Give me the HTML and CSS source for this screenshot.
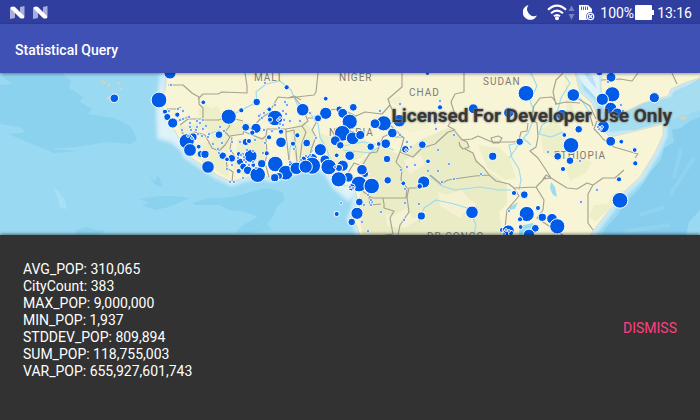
FILE: index.html
```html
<!DOCTYPE html>
<html lang="en">
<head>
<meta charset="utf-8">
<title>Statistical Query</title>
<link rel="stylesheet" href="styles.css">
</head>
<body>
<div class="status-bar">
  <div class="status-group">
    <svg class="n-icon" viewBox="0 0 15 13" aria-hidden="true"><path d="M0 1L5 4V12L0 13ZM10 1L14.500 0V12L10 9Z" fill="#a9aedb"/><path d="M1 1Q3 0 5 1L14 10V12Q12 13 10 12L1 3Z" fill="#fff"/></svg>
    <svg class="n-icon" viewBox="0 0 15 13" aria-hidden="true"><path d="M0 1L5 4V12L0 13ZM10 1L14.500 0V12L10 9Z" fill="#a9aedb"/><path d="M1 1Q3 0 5 1L14 10V12Q12 13 10 12L1 3Z" fill="#fff"/></svg>
  </div>
  <div class="status-group status-right">
    <svg class="moon" viewBox="0 0 14 15" aria-hidden="true"><path d="M5.500 0A7.500 7.500 0 1 0 14 10.500A7 7 0 0 1 5.500 0Z" fill="#fff"/></svg>
    <svg class="wifi" viewBox="0 0 28 17" aria-hidden="true"><g fill="none" stroke="#fff" stroke-width="2.100"><path d="M1 5.800Q10 -2.500 19 5.800"/><path d="M4 9.300Q10 4 16 9.300"/><path d="M7 12.300Q10 9.700 13 12.300"/></g><circle cx="10" cy="14.300" r="2" fill="#fff"/><path d="M21.500 7L24.500 1.500L27.500 7ZM21.500 10H27.500L24.500 16Z" fill="#7680c4"/></svg>
    <svg class="sd" viewBox="0 0 16 17" aria-hidden="true"><path d="M0 1H9L13 5V16H0Z" fill="#fff"/><path d="M2.500 2.500V6M4.500 2.500V6M6.500 2.500V6M8.500 2.500V6" stroke="#5660b0"/><circle cx="11.500" cy="12.500" r="4" fill="#303f9f" stroke="#303f9f"/><circle cx="11.500" cy="12.500" r="3.200" fill="none" stroke="#fff" stroke-width="1.300"/><path d="M10 11L13 14M13 11L10 14" stroke="#fff" stroke-width="1.200"/></svg>
    <span class="percent">100%</span>
    <svg class="battery" viewBox="0 0 20 15" aria-hidden="true"><path d="M0 1Q0 0 1 0H16Q17 0 17 1V5H19V10H17V14Q17 15 16 15H1Q0 15 0 14Z" fill="#fff"/></svg>
    <span class="clock">13:16</span>
  </div>
</div>
<header class="app-bar"><h1>Statistical Query</h1></header>
<main class="map">
  <svg class="map-canvas" viewBox="0 73 700 162" preserveAspectRatio="xMidYMid slice" role="img" aria-label="Map of African cities">
    <defs>
      <filter id="soft" x="-5%" y="-5%" width="110%" height="110%"><feGaussianBlur stdDeviation="1.5"/></filter>
      <filter id="edge" x="-5%" y="-5%" width="110%" height="110%"><feGaussianBlur stdDeviation="0.6"/></filter>
      <path id="africa" d="M167 60V73L166 82L165 90L160 100L163 108L165 116L169 124L175 131L181 142L187 155L202 165L217 175L232 182L243 178L260 175L272 178L290 173L300 168L315 163L323 167L329 173L334 182L345 186L353 185L357 197L355 210L351 219L357 226L363 245H583L590 235L607 213L623 193L640 177L655 153L663 135V124L647 128L627 133L610 137L603 130L598 116L592 103L580 92L575 73V60Z"/>
      <path id="arabia" d="M602 60V73L601 85L602 97L607 118L623 113L643 103L668 96L671 89L687 82L700 78V60Z"/>
    </defs>
    <rect y="60" width="700" height="185" fill="#99d9f2"/>
    <g fill="#8bd2ef" filter="url(#edge)">
      <path d="M0 85L12 84L3 77V73H62L71 81L69 88L83 97L80 102L92 109L88 114L114 118L130 126L134 132L137 140L130 144L108 142L75 147L50 149L80 151L54 153L8 134L26 132L20 127L0 124ZM139 199L158 196L174 196L189 198L180 202L172 206L156 210L142 205L150 203ZM192 203L209 198L223 198L241 195L258 190L267 188L282 192L285 200L277 206L274 215L267 224L272 230L240 234L236 231L245 224L258 217L246 212L229 210L220 205L195 205ZM76 230L86 227L97 230L106 231L98 235H76ZM149 176L155 181L158 175L163 187L155 185Z"/>
    </g>
    <path d="M53 187L58 191L65 200L67 209L60 208L58 199Z" fill="#a9dff4"/>
    <g fill="#86cdee" filter="url(#edge)">
      <path d="M700 117L690 121L681 128L672 130L674 142L664 148L661 160L650 172L640 188L625 203L617 216L604 230L600 240H685L689 222L700 210Z"/>
      <path d="M670 195L694 158M640 215L665 207M627 231L670 225M681 149L674 178" stroke="#8fd3f0" stroke-width="4" fill="none"/>
      <path d="M700 210L690 225L686 240H700Z" fill="#99d9f2"/>
    </g>
    <g filter="url(#soft)" fill="#c9eaf6" stroke="#c9eaf6" stroke-linejoin="round">
      <use href="#africa" stroke-width="9"/><use href="#arabia" stroke-width="7"/>
      <path fill="#dff2f8" d="M161 73L157 110L158 138L172 142L187 155L170 110ZM312 164L326 175L334 188L348 200L361 190Z" stroke-width="3"/>
    </g>
    <path d="M578 73L598 98L605 131L635 130L671 120L700 110V78L672 97L643 103L607 119L600 97L598 73Z" fill="#a7ddf0"/>
    <path d="M577 73L583 84L598 100L600 92L599 73Z" fill="#def2f8"/>
    <path d="M584 73L590 82L597 89L593 77L589 73Z" fill="#b9e3f3"/>
    <g fill="#f7f5d6" stroke="#dcdcc6"><use href="#africa"/><use href="#arabia"/></g>
    <g fill="#edefc9" filter="url(#edge)">
      <path d="M178 126L190 125L201 122L198 110L205 103L211 108L218 106L222 117L232 122L243 121L252 124L245 132L231 136L228 150L229 178L217 171L205 164L187 149ZM238 139L262 137L266 142L263 176L243 176L233 169L236 156ZM290 130L302 121L314 130L314 142L309 163L296 165L292 148Z"/>
      <path d="M319 132L330 137L338 134L345 142L361 137L374 147L361 158L350 162L345 180L337 182L327 166L318 157Z"/>
      <path d="M360 162L372 151L383 147L400 155L422 139L450 127L463 138L481 166L507 184L507 204L499 212L503 235H363L357 210L361 190Z" fill="#e9ecc5"/>
      <path d="M566 169L580 157L592 162L586 173L570 181ZM589 216L594 205L608 204L612 194L625 190L619 201L595 222ZM565 76L572 104L578 123L567 121ZM540 130L556 120L568 140L560 161L543 153ZM478 145L500 148L510 158L516 178L505 180L487 168Z"/>
      <path d="M384 100L400 96L404 115L392 127L414 132L430 128L422 118L407 110Z" fill="#f1f2cf"/>
    </g>
    <g fill="#f4f2d2" filter="url(#edge)"><path d="M386 214L393 216L406 208L412 218L420 218L405 228L387 226ZM438 192L447 195L461 190L469 199L477 205L466 210L460 218L440 206ZM190 133L207 128L214 140L197 145ZM404 160L420 154L425 165L410 174Z"/></g>
    <g fill="none" stroke="#9bdcf0" stroke-width="1.200" stroke-linejoin="round">
      <path d="M230 116L257 102L256 92L266 84L280 81L291 90L297 104L309 112L318 124L320 137L326 148L333 166M209 134L220 130M313 150L304 160M291 141L289 160M430 176L442 186L455 190L480 187L499 190L511 190M419 222L424 208L436 200L454 204L467 208L476 224L474 235M531 73L537 86L530 100L535 115L528 133L519 143L509 145L512 158L519 169L521 180L519 190M519 143L515 150L509 158M523 138L531 145M565 76L570 83L561 98L556 117L542 125L539 134L551 137L563 132M343 146L363 142L380 145L394 150M343 150L370 153L388 141M580 98L592 116"/>
    </g>
    <path d="M520 226L533 223L536 230L532 240H518ZM551 182L555 187L557 197L553 195L550 188ZM510 207L518 202L515 209L509 210Z" fill="#9bdcf0"/>
    <g fill="none" stroke="#a5a391" stroke-width="1.150" stroke-linejoin="round">
      <path d="M168 85H183L192 93L199 97L199 104L203 108L203 120L219 120L226 117L231 118L243 121M198 99L203 94L218 94L222 92L247 93V86L245 73M167 109H177L181 107M169 119L179 121L190 116M180 125L188 119L201 119M181 129L184 136L195 132L205 135L212 148L219 151L225 145L230 137L225 132L229 127L231 120M230 136L243 134L244 131L253 127L261 118L269 113L278 97L288 98L294 96L301 100M288 98L314 95L316 92L318 73M295 98L302 107L308 121L302 126L286 129L267 129L266 136L262 139L245 132M286 129V135L289 160M232 182L233 172L227 168L226 156L220 156M232 137L230 149L236 158M266 138L267 154L265 163L269 177M286 132L294 130L297 162M302 126L306 132L302 143L299 167M317 121L312 130L316 137L311 150L309 165M308 118L318 118L326 110L341 109L356 116L365 112L382 114L390 105L388 99L402 87V73M390 105L396 117L390 125L404 138L400 152L413 157L422 148L435 144L448 132L455 130L448 126L455 115L451 102L455 94L464 92V73M343 178L348 173L354 163L362 166L370 153L377 152L383 137L391 133L394 137H403M361 190L372 198H406L407 188L401 180L402 169L396 162L400 152M369 197L370 205L381 204M372 198H383L384 204L384 208L394 211L390 218L393 234L380 236M407 197L409 212L400 225L398 235M407 197L409 188H422M430 175L441 184L448 180L461 178L475 176L489 175L496 181L509 184L514 188L536 187L546 177M455 131L462 140L472 139L478 136L492 142H514L519 140L521 132L527 131L528 123M461 139L467 142L469 147L463 149L460 146L459 142M491 138L498 136L502 138L499 143L493 143ZM465 149L473 153L476 161L484 168L489 175M552 97L540 98L534 106L531 119L537 123L538 137L536 147L530 151L538 158L546 170M546 170L551 178L543 179L546 175L551 178M552 97L557 104L566 102L580 103M563 73L556 80L553 92L556 105M597 121L594 129L599 134L603 139L614 147L638 154L635 158M624 170L615 178L603 178L593 185L587 183L577 189L567 188L551 178M593 185L588 194V223L593 230M536 187L544 200L543 210L537 218L564 236M514 188L519 196L507 210L505 228M589 112L593 126M672 73L677 84M601 80L620 79L632 81L638 73M577 98L590 106L596 119"/>
    </g>
    <g class="map-label">
      <text x="254" y="81">MALI</text><text x="339" y="81">NIGER</text><text x="409" y="96">CHAD</text><text x="483" y="85">SUDAN</text><text x="329" y="136">NIGERIA</text><text x="554" y="159">ETHIOPIA</text><text x="427" y="240">DR CONGO</text>
    </g>
    <g fill="#d9d3b5"><circle cx="102" cy="81" r="1.500"/><circle cx="104" cy="83" r="1.200"/><circle cx="109" cy="85" r="1.500"/><circle cx="119" cy="83" r="1.200"/><circle cx="121" cy="89" r="1.200"/><circle cx="108" cy="98" r="1.500"/><path d="M679 118L684 116L688 118L682 120Z"/></g>
    <g id="cities" class="cities"></g>
  </svg>
  <div class="watermark">Licensed For Developer Use Only</div>
</main>
<section class="snackbar">
  <ul class="stats">
    <li>AVG_POP: 310,065</li>
    <li>CityCount: 383</li>
    <li>MAX_POP: 9,000,000</li>
    <li>MIN_POP: 1,937</li>
    <li>STDDEV_POP: 809,894</li>
    <li>SUM_POP: 118,755,003</li>
    <li>VAR_POP: 655,927,601,743</li>
  </ul>
  <button class="dismiss" type="button">DISMISS</button>
</section>
<script src="script.js"></script>
</body>
</html>
```
FILE: styles.css
```css
* { box-sizing: border-box; }
body {
  margin: 0;
  min-height: 100vh;
  display: flex;
  flex-direction: column;
  background: #323232;
  color: #fff;
  font-family: Roboto, "Liberation Sans", sans-serif;
}
svg { display: block; flex: none; }
.status-bar {
  display: flex;
  align-items: center;
  justify-content: space-between;
  height: 24px;
  padding: 1px 8px 0 10px;
  background: #303f9f;
  font-size: 14px;
  line-height: 16px;
}
.status-group { display: flex; align-items: center; gap: 8px; }
.status-right { gap: 4px; }
.n-icon { width: 15px; height: 13px; }
.moon { width: 14px; height: 15px; margin-right: 6px; }
.wifi { width: 28px; height: 17px; }
.sd { width: 16px; height: 17px; }
.percent { margin-left: 1px; }
.battery { width: 20px; height: 15px; margin: 0 -2px 0 -3px; }
.app-bar {
  position: relative;
  z-index: 1;
  display: flex;
  align-items: center;
  height: 49px;
  padding: 2px 15px 0;
  background: #3f51b5;
  box-shadow: 0 1px 3px rgba(0, 0, 0, .4);
}
.app-bar h1 { margin: 0; font-size: 14px; line-height: 20px; font-weight: 500; }
.map { position: relative; flex: 1 0 120px; min-height: 0; overflow: hidden; }
.map-canvas { position: absolute; inset: 0; width: 100%; height: 100%; }
.map-label { font-size: 10px; letter-spacing: 1px; fill: #7c7c76; }
.cities circle { fill: #005ce6; stroke: #fff; stroke-width: 1; }
.watermark {
  position: absolute;
  top: 31px;
  right: 28px;
  color: rgba(40, 40, 36, .85);
  font-size: 19px;
  line-height: 24px;
  font-weight: 700;
  text-shadow: 0 0 2px #888, 0 0 2px #888;
}
.snackbar {
  position: relative;
  display: flex;
  align-items: center;
  justify-content: space-between;
  padding: 0 15px 0 23px;
  background: #323232;
  box-shadow: 0 -1px 3px rgba(0, 0, 0, .5);
}
.stats {
  margin: 0;
  padding: 26px 0 40px;
  list-style: none;
  font-size: 14px;
  line-height: 17px;
}
.dismiss {
  padding: 8px;
  border: 0;
  background: none;
  color: #ff4081;
  font: 400 14px/20px Roboto, "Liberation Sans", sans-serif;
}
```
FILE: script.js
```javascript
// Towns: x, y. Drawn as small dots over the cities.
const towns = [
  [171,85],[178,109],[183,111],[180,120],[183,119],[189,117],[197,121],[197,127],[196,130],[182,130],[191,130],
  [169,111],[190,123],[203,120],[200,123],[206,126],[209,134],[203,129],[188,136],[198,134],[192,138],[202,136],[208,137],[213,144],[222,143],[218,149],[219,153],[227,169],[231,151],[232,142],[240,142],[230,182],[234,182],[243,178],[232,165],[220,127],[224,131],[190,127],[265,83],[260,115],[262,118],[259,116],[264,113],[275,105],[285,102],[287,105],[283,111],[286,114],[280,118],[284,120],[290,121],[283,125],[280,124],[278,120],[300,121],[310,113],[272,131],[264,130],[279,128],[265,143],[255,140],[263,153],[294,149],[243,154],[244,157],[246,162],[249,165],[253,151],[247,150],[238,158],[241,155],[244,160],[253,162],[256,168],[290,162],[301,160],[316,138],[306,156],[310,155],[335,167],[380,111],[400,104],[400,135],[435,123],[428,171],[401,170],[407,167],[415,165],[449,164],[438,150],[436,129],[454,135],[438,171],[454,179],[442,182],[481,174],[548,152],[440,101],[407,142],[411,147],[406,150],[405,189],[405,203],[419,204],[404,220],[381,212],[372,202],[371,205],[364,205],[371,200],[368,195],[341,203],[362,222],[368,231],[353,188],[350,187],[509,211],[509,231],[506,230],[621,105],[623,111],[580,161],[597,190],[581,202],[608,82],[599,129],[602,127],[598,127],[504,234]
];
// Cities: x, y, radius, in drawing order.
const cities = [
  [114.3,98.3,3.7],[170,73,5.5],[159,100,7.3],[165,111.7,2],[167.3,117,3],[172.7,123,4.5],[177.3,114.7,2],[193,137,3.5],[186.7,141.3,7],[190,150,5.8],
  [203.3,102.3,1.8],[228.7,116.7,7],[241.3,110.3,2],[256.7,102,3.2],[286.7,87.3,2],[302.7,109.7,5.7],[269.3,109.3,1.8],[275,118,7.2],[270,119.7,2],
  [245.7,127.3,3.3],[256,128.3,4.5],[252.3,132.7,2],[219,134.7,3.3],[198.7,146.7,1.8],[200.7,154,3],[205,154.3,3.5],[208,167,5.7],[222.7,155.7,3.2],[231.7,158.3,3.3],[227,159.3,1.8],[238.7,154,1.8],
  [245.7,142,3],[249,141,2],[269,137.3,2],[281,131.7,2],[281,142.3,4.7],[297.3,135.3,2],[293,143.7,2],[306.7,143,3.3],[266.7,153.3,2],[250.7,156,5.8],[240,161.7,3],[243.3,166.7,3],[238.7,171,2],[247.7,170.3,3.7],[253.3,165,1.8],[261.7,163.7,3.5],[257.7,174.7,7.2],
  [291,164,2],[275.3,164,7.2],[285.7,172.7,6.8],[279,176,3],[274.7,177.7,3.5],[296.3,168.3,5.7],[304,159,2.5],[312,159,5],[325,160,4.5],[312,165.7,8],[305.7,166.7,6],
  [317.3,118.3,3.3],[325.7,113.3,5.5],[318,118.3,3],[325.7,98.7,1.8],[339.3,109.3,2.8],[342.7,113.3,4.3],[353.3,107.3,3.3],[349.7,121.7,7],[342.3,133.3,7.3],[335.3,140.7,4.3],[340.3,145.3,3.2],[352.7,138.3,5.8],[360.3,135,4],
  [383.7,123.3,7],[375,123.7,4.3],[399.3,120.7,5.7],[392.3,133,4.2],[385.7,143.7,4.2],[378.7,144,1.8],[370.7,146.7,3.2],[320.3,149.7,5.5],[349.7,155.7,4.2],[336.7,155.3,1.8],[387,159,3.2],[405.3,149.3,3.2],[422.3,144.7,3.3],[428,161.3,1.8],
  [328.7,167,7.2],[342.7,165.7,5],[339,168,3],[348.3,177.3,4.3],[338.7,179.3,7],[365,174,3],[362,169.7,4.7],[359,184,7.3],[351.7,187.3,3],[371.7,186,7.2],[387.7,180.3,3.2],[403.3,183.3,1.8],[423.7,182,5.5],[419.7,186.3,2.2],[359.3,202,3.3],[357,213.3,5.5],[351.7,222,3.2],[336.7,214,2],[421.3,216,3.5],[440,107.3,2],[427.5,73,1.8],
  [473.3,108.7,4.3],[508.7,112.7,4.5],[526,93.3,7.3],[519.7,141.7,3.2],[492.7,156.3,3.5],[557.7,156.3,3.3],[563,169,2],[564.3,135,1.8],[514,193,2],[524.3,194.7,3.3],[472,212.3,5.7],[526.7,214,7],[538,208,2],[520,219.3,2],[542.3,217.3,3.5],[552,218.7,4.7],[557.3,226.3,7],[520.7,227,1.8],[535.3,228.3,3.3],[502,230,2],[508.3,231,5.5],[506,233,2.5],[511,233,2],[529,234.7,5],
  [573.3,95,5.7],[599.5,72,3.2],[611,77.3,4.3],[612.3,94.3,7],[602.3,99.3,5.5],[610.7,108.3,5.5],[617.3,113.3,4.7],[654.3,97.7,4.5],[562,115,5],[578.7,129.3,3.2],[603.3,126.7,5.5],[600,129,1.5],[571,145.3,7.2],[570,160.7,3.2],[610.7,141.3,4.3],[621.3,141.7,1.8],[634.7,150,1.8],[635.3,163.3,2],[619,179.3,2],[620,200.3,7.3]
];
const layer = document.getElementById("cities");
function addMarker(x, y, r) {
  const dot = document.createElementNS("http://www.w3.org/2000/svg", "circle");
  dot.setAttribute("cx", x);
  dot.setAttribute("cy", y);
  dot.setAttribute("r", r);
  layer.appendChild(dot);
}
cities.forEach(([x, y, r]) => addMarker(x, y, r + 0.6));
towns.forEach(([x, y]) => addMarker(x, y, 1.4));
```
